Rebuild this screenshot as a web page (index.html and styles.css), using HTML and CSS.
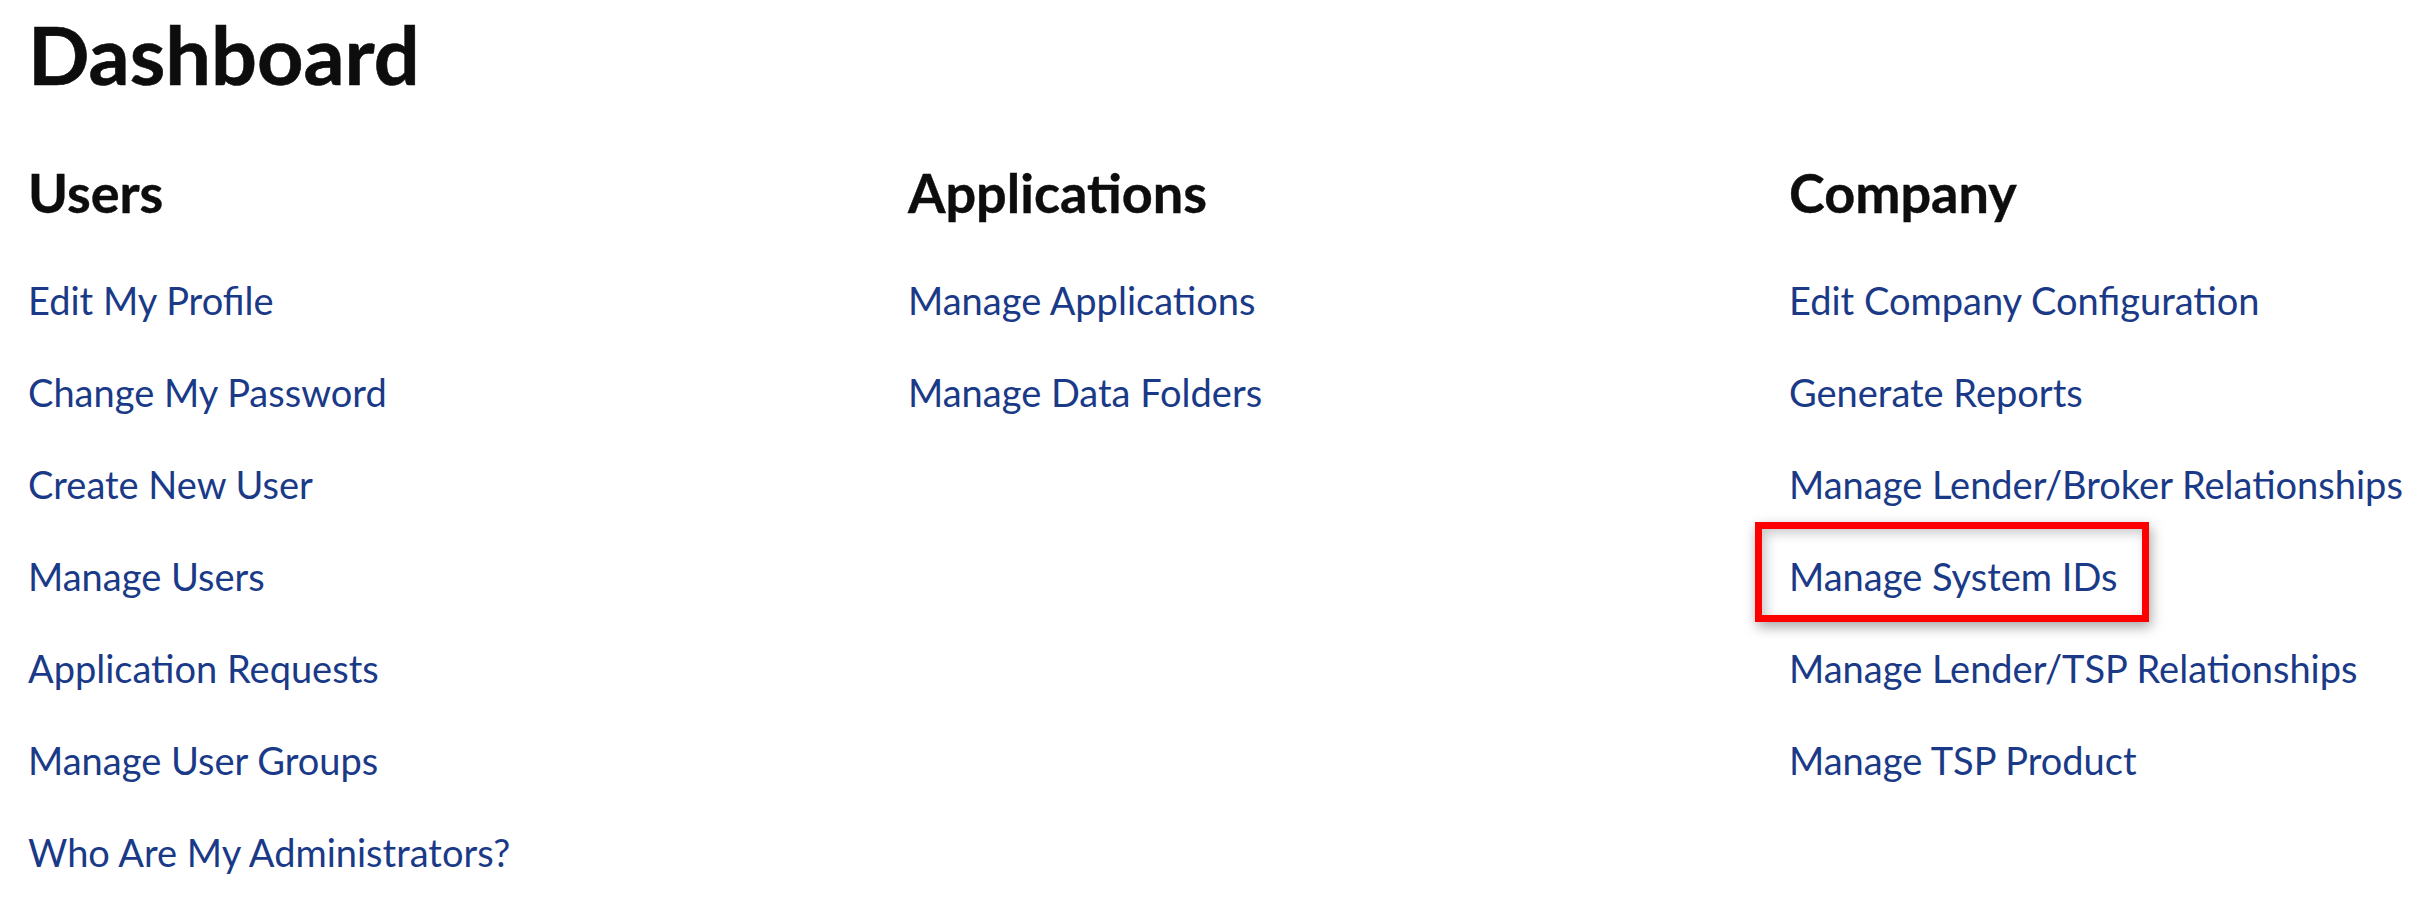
FILE: index.html
```html
<!DOCTYPE html>
<html lang="en">
<head>
<meta charset="utf-8">
<title>Dashboard</title>
<link rel="stylesheet" href="styles.css">
</head>
<body>
<main class="page">
  <h1 class="title">Dashboard</h1>
  <div class="columns">
    <section class="col">
      <h2 class="col-title">Users</h2>
      <ul class="links">
        <li><a href="#">Edit My Profile</a></li>
        <li><a href="#">Change My Password</a></li>
        <li><a href="#">Create New User</a></li>
        <li><a href="#">Manage Users</a></li>
        <li><a href="#">Application Requests</a></li>
        <li><a href="#">Manage User Groups</a></li>
        <li><a href="#">Who Are My Administrators?</a></li>
      </ul>
    </section>
    <section class="col">
      <h2 class="col-title">Applications</h2>
      <ul class="links">
        <li><a href="#">Manage Applications</a></li>
        <li><a href="#">Manage Data Folders</a></li>
      </ul>
    </section>
    <section class="col">
      <h2 class="col-title">Company</h2>
      <ul class="links">
        <li><a href="#">Edit Company Configuration</a></li>
        <li><a href="#">Generate Reports</a></li>
        <li><a href="#">Manage Lender/Broker Relationships</a></li>
        <li><a href="#" class="marked">Manage System IDs<span class="highlight"></span></a></li>
        <li><a href="#">Manage Lender/TSP Relationships</a></li>
        <li><a href="#">Manage TSP Product</a></li>
      </ul>
    </section>
  </div>
</main>
</body>
</html>
```

FILE: styles.css
```css
html, body {
  margin: 0;
  padding: 0;
  background: #ffffff;
}

body {
  font-family: Lato, "Open Sans", sans-serif;
  color: #111111;
}

.page {
  padding: 6px 0 0 28px;
}

.title {
  margin: 0;
  font-size: 81px;
  line-height: 96px;
  font-weight: 700;
  color: #0d0d0d;
  -webkit-text-stroke: 0.6px #0d0d0d;
}

.columns {
  display: grid;
  grid-template-columns: 880px 881px 1fr;
  margin-top: 61px;
}

.col-title {
  margin: 0;
  font-size: 54px;
  line-height: 60px;
  font-weight: 700;
  color: #0d0d0d;
  -webkit-text-stroke: 0.4px #0d0d0d;
}

.links {
  list-style: none;
  margin: 31px 0 0 0;
  padding: 0;
}

.links li {
  font-size: 38px;
  line-height: 92px;
}

.links a {
  color: #1a3a88;
  text-decoration: none;
}

.marked {
  position: relative;
  display: inline-block;
}

.highlight {
  position: absolute;
  left: -34px;
  right: -31px;
  top: -8px;
  bottom: 0;
  border: 7px solid #ff0000;
  box-shadow: 2px 5px 12px rgba(0, 0, 0, 0.35), inset 4px 4px 12px rgba(0, 0, 0, 0.22);
  pointer-events: none;
}
```
